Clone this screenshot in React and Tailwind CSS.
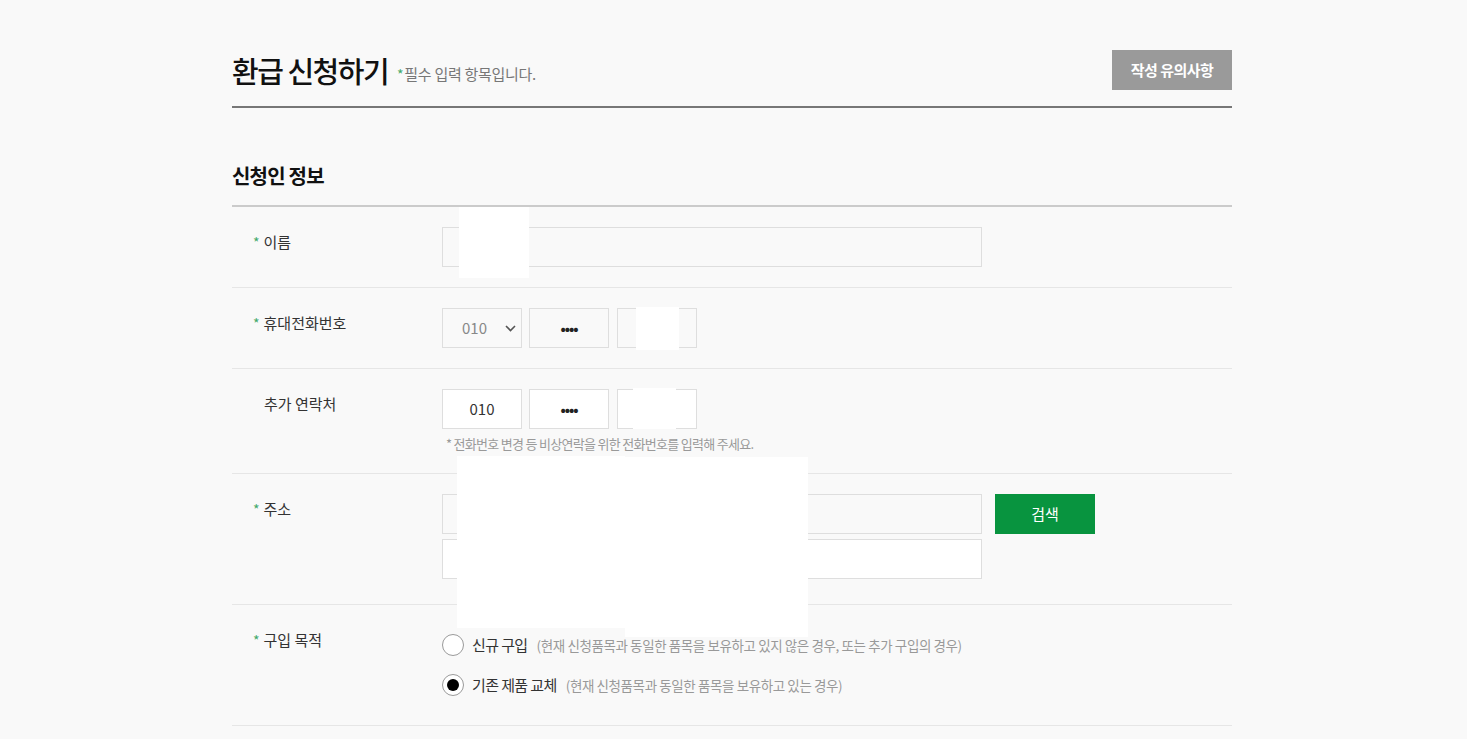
import React from 'react';

const font = { fontFamily: '"Noto Sans CJK KR", "Noto Sans", sans-serif' };

const Star = () => <span className="text-[#43a96b] text-[14px] mr-[4px]">*</span>;

const Row = ({ label, required, children, className = '' }) => (
  <div className={`flex border-b border-[#e6e6e6] ${className}`}>
    <div className="w-[210px] shrink-0 pl-[21px] pt-[23px] text-[15px] leading-[24px] tracking-[0px] text-[#333]">
      {required ? <Star /> : <span className="inline-block w-[11px]" />}
      {label}
    </div>
    <div className="flex-1">{children}</div>
  </div>
);

const Box = ({ children, white, className = '' }) => (
  <div
    className={`h-[40px] border border-[#dedede] flex items-center justify-center text-[15px] ${
      white ? 'bg-white' : 'bg-[#f9f9f9]'
    } ${className}`}
  >
    {children}
  </div>
);

const Dots = () => <span className="text-[#222] text-[14px] font-bold tracking-[-1px] leading-none">••••</span>;

const Radio = ({ checked, title, desc }) => (
  <div className="flex items-center h-[22px]">
    <span className="w-[22px] h-[22px] rounded-full border border-[#9a9a9a] bg-white flex items-center justify-center">
      {checked && <span className="w-[12px] h-[12px] rounded-full bg-black" />}
    </span>
    <span className="ml-[8px] text-[15px] tracking-[-0.6px] text-[#333]">{title}</span>
    <span className="ml-[9px] text-[13.5px] tracking-[-0.4px] text-[#999]">{desc}</span>
  </div>
);

export default function App() {
  return (
    <div className="relative min-h-screen bg-[#f9f9f9] pb-[60px]" style={font}>
      <div className="w-[1000px] ml-[232px] pt-[50px]">
        {/* 타이틀 */}
        <div className="flex items-center justify-between pb-[16px] border-b-2 border-[#777]">
          <div className="flex items-end">
            <h1 className="text-[29px] font-medium tracking-[-1.5px] leading-[36px] text-[#111]">환급 신청하기</h1>
            <span className="ml-[9px] mb-[3px] text-[15px] tracking-[-0.3px] text-[#777]">
              <span className="text-[#43a96b] text-[14px] mr-[1px]">*</span>필수 입력 항목입니다.
            </span>
          </div>
          <button className="w-[120px] h-[40px] bg-[#9a9a9a] text-white text-[15px] font-bold tracking-[-0.5px]">
            작성 유의사항
          </button>
        </div>

        {/* 신청인 정보 */}
        <h2 className="mt-[53px] pb-[14px] text-[20px] font-bold tracking-[-0.8px] text-[#111] border-b-2 border-[#cbcbcb]">
          신청인 정보
        </h2>

        <Row label="이름" required>
          <div className="py-[20px]">
            <Box className="w-[540px]" />
          </div>
        </Row>

        <Row label="휴대전화번호" required>
          <div className="py-[20px] flex gap-[7px]">
            <div className="w-[80px] h-[40px] border border-[#dedede] bg-[#f9f9f9] flex items-center justify-between pl-[19px] pr-[5px] text-[15px] text-[#888]">
              <span>010</span>
              <svg width="11" height="7" viewBox="0 0 11 7" fill="none">
                <path d="M1 1l4.5 4.5L10 1" stroke="#555" strokeWidth="1.6" />
              </svg>
            </div>
            <Box className="w-[80px]"><Dots /></Box>
            <Box className="w-[80px] ml-[1px]" />
          </div>
        </Row>

        <Row label="추가 연락처">
          <div className="pt-[20px] pb-[20px]">
            <div className="flex gap-[7px]">
              <Box white className="w-[80px] text-[#333]">010</Box>
              <Box white className="w-[80px]"><Dots /></Box>
              <Box white className="w-[80px] ml-[1px]" />
            </div>
            <p className="mt-[6px] pl-[4px] text-[13px] leading-[18px] tracking-[-0.7px] text-[#999]">
              * 전화번호 변경 등 비상연락을 위한 전화번호를 입력해 주세요.
            </p>
          </div>
        </Row>

        <Row label="주소" required>
          <div className="pt-[20px] pb-[25px]">
            <div className="flex gap-[13px]">
              <Box className="w-[540px]" />
              <button className="w-[100px] h-[40px] bg-[#08943f] text-white text-[15px]">검색</button>
            </div>
            <Box white className="w-[540px] mt-[5px]" />
          </div>
        </Row>

        <Row label="구입 목적" required>
          <div className="pt-[29px] pb-[29px] flex flex-col gap-[18px]">
            <Radio title="신규 구입" desc="(현재 신청품목과 동일한 품목을 보유하고 있지 않은 경우, 또는 추가 구입의 경우)" />
            <Radio checked title="기존 제품 교체" desc="(현재 신청품목과 동일한 품목을 보유하고 있는 경우)" />
          </div>
        </Row>
      </div>

      {/* 가림 처리 */}
      <div className="absolute left-[459px] top-[207px] w-[70px] h-[71px] bg-white" />
      <div className="absolute left-[636px] top-[307px] w-[43px] h-[43px] bg-white" />
      <div className="absolute left-[633px] top-[388px] w-[43px] h-[41px] bg-white" />
      <div className="absolute left-[457px] top-[456px] w-[168px] h-[172px] bg-white" />
      <div className="absolute left-[625px] top-[457px] w-[183px] h-[180px] bg-white" />
    </div>
  );
}
